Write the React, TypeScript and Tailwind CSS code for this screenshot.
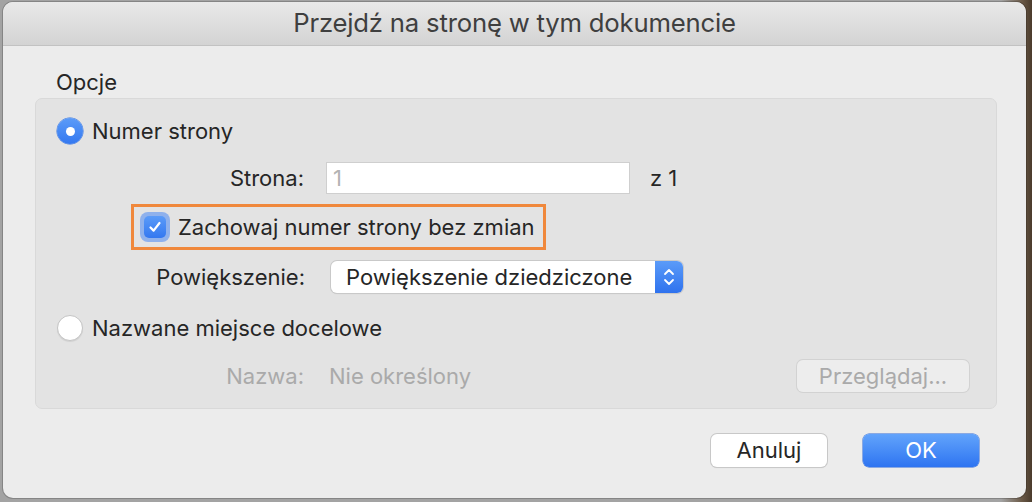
import * as React from "react";

const font = { fontFamily: "Inter, 'Liberation Sans', sans-serif" };

function Radio({ checked }: { checked: boolean }) {
  return checked ? (
    <span className="flex h-[26px] w-[26px] items-center justify-center rounded-full bg-gradient-to-b from-[#5b9bf8] to-[#3478f0] shadow-[0_0_0_0.5px_#2f6fe0]">
      <span className="h-[9px] w-[9px] rounded-full bg-white" />
    </span>
  ) : (
    <span className="h-[26px] w-[26px] rounded-full border border-[#c4c4c4] bg-white shadow-[0_1px_1px_rgba(0,0,0,0.08)]" />
  );
}

export default function App() {
  return (
    <div
      className="relative h-[502px] w-[1032px] overflow-hidden bg-[linear-gradient(90deg,#a3a3a3_0%,#a3a3a3_97%,#6b5a48_99%,#4a3b2c_100%)]"
      style={font}
    >
      <div className="absolute left-[3px] top-[2px] flex h-[496px] w-[1023px] flex-col overflow-hidden rounded-[10px] bg-[#ececec] shadow-[0_0_0_1px_rgba(0,0,0,0.18)]">
        {/* title bar */}
        <div className="flex h-[44px] shrink-0 items-center justify-center border-b border-[#c2c2c2] bg-gradient-to-b from-[#e9e9e9] to-[#d3d3d3]">
          <span className="text-[25.7px] tracking-[-0.2px] text-[#3f3f3f]">Przejdź na stronę w tym dokumencie</span>
        </div>

        <div className="flex flex-1 flex-col pl-[32px] pr-[29px]">
          <div className="mt-[24px] pl-[21px] text-[22px] leading-[24px] text-[#262626]">Opcje</div>

          {/* group box */}
          <div className="mt-[4px] flex h-[311px] flex-col rounded-[7px] border border-[#d9d9d9] bg-[#e3e3e3] pl-[21px] pr-[27px] text-[22px] text-[#262626]">
            <div className="mt-[19px] flex h-[26px] items-center gap-[9px]">
              <Radio checked />
              <span>Numer strony</span>
            </div>

            <div className="mt-[18px] flex h-[32px] items-center">
              <span className="w-[247px] text-right">Strona:</span>
              <div className="ml-[22px] flex h-[32px] w-[304px] items-center border border-[#cfcfcf] bg-white px-[6px] text-[#b3b3b3]">1</div>
              <span className="ml-[20px]">z 1</span>
            </div>

            <div className="mt-[10px] flex">
              <div className="ml-[74px] flex h-[46px] items-center gap-[8px] border-[3px] border-[#f0883c] pl-[6px] pr-[8px]">
                <span className="flex h-[30px] w-[30px] items-center justify-center rounded-[8px] bg-[#8fb1ec]">
                  <span className="flex h-[22px] w-[22px] items-center justify-center rounded-[5px] bg-gradient-to-b from-[#5b9bf8] to-[#3478f0]">
                    <svg width="14" height="14" viewBox="0 0 14 14" fill="none">
                      <path d="M2.5 7.5 L5.6 10.6 L11.5 3" stroke="white" strokeWidth="2.2" strokeLinecap="round" strokeLinejoin="round" />
                    </svg>
                  </span>
                </span>
                <span>Zachowaj numer strony bez zmian</span>
              </div>
            </div>

            <div className="mt-[11px] flex h-[32px] items-center">
              <span className="w-[248px] text-right">Powiększenie:</span>
              <div className="ml-[26px] flex h-[32px] w-[352px] items-stretch overflow-hidden rounded-[6px] bg-white shadow-[0_0_0_1px_#c9c9c9,0_1px_1px_rgba(0,0,0,0.12)]">
                <span className="flex flex-1 items-center pl-[15px]">Powiększenie dziedziczone</span>
                <span className="flex w-[28px] items-center justify-center bg-gradient-to-b from-[#5b9bf8] to-[#2f72ee]">
                  <svg width="12" height="20" viewBox="0 0 12 20" fill="none">
                    <path d="M2 7 L6 3 L10 7" stroke="white" strokeWidth="1.8" strokeLinecap="round" strokeLinejoin="round" />
                    <path d="M2 13 L6 17 L10 13" stroke="white" strokeWidth="1.8" strokeLinecap="round" strokeLinejoin="round" />
                  </svg>
                </span>
              </div>
            </div>

            <div className="mt-[22px] flex h-[26px] items-center gap-[9px]">
              <Radio checked={false} />
              <span>Nazwane miejsce docelowe</span>
            </div>

            <div className="mt-[19px] flex h-[32px] items-center text-[#aaaaaa]">
              <span className="w-[247px] text-right">Nazwa:</span>
              <span className="ml-[25px] flex-1">Nie określony</span>
              <span className="flex h-[32px] w-[172px] items-center justify-center rounded-[6px] bg-[#ededed] shadow-[0_0_0_1px_#d2d2d2]">Przeglądaj...</span>
            </div>
          </div>

          {/* buttons */}
          <div className="mt-[25px] flex justify-end gap-[36px] pr-[18px] text-[22px]">
            <button className="flex h-[33px] w-[116px] items-center justify-center rounded-[6px] bg-white text-[#262626] shadow-[0_0_0_1px_#c8c8c8,0_1px_1px_rgba(0,0,0,0.15)]">Anuluj</button>
            <button className="flex h-[33px] w-[116px] items-center justify-center rounded-[6px] bg-gradient-to-b from-[#62a3fb] to-[#2e74f1] text-white shadow-[0_0_0_0.5px_#2a66d8]">OK</button>
          </div>
        </div>
      </div>
    </div>
  );
}
